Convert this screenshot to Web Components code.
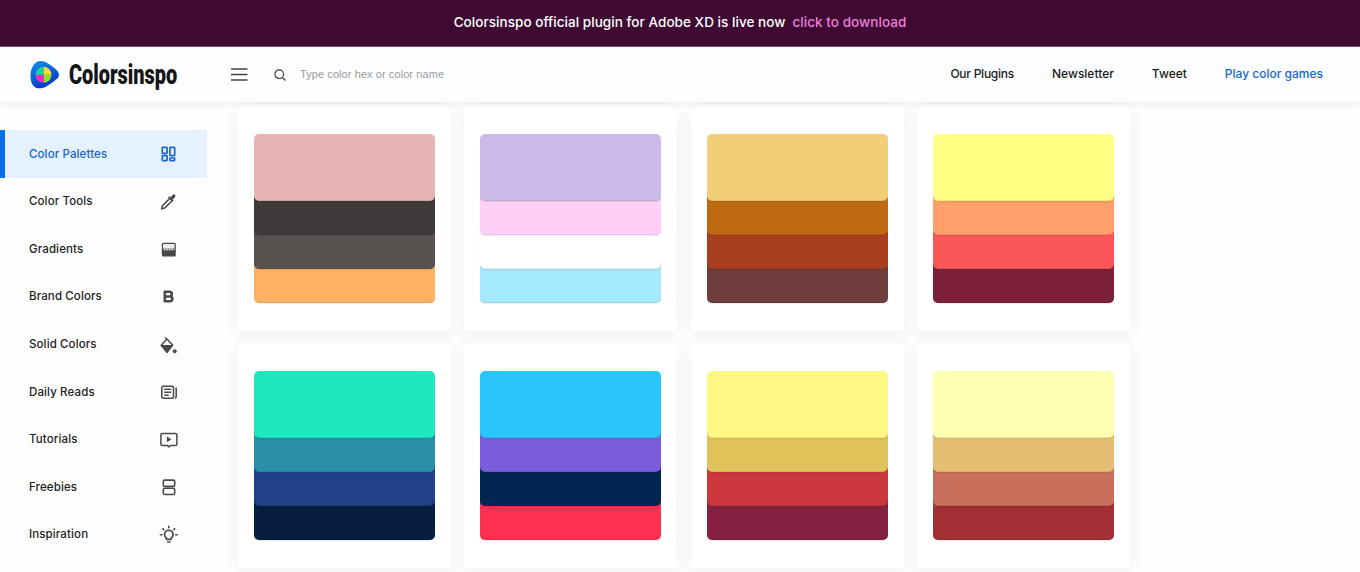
<!doctype html>
<html><head><meta charset="utf-8"><title>Colorsinspo</title>
<style>
html,body{margin:0;padding:0;height:572px;overflow:hidden;background:#fdfdfe;font-family:Inter,"Liberation Sans",sans-serif}
</style></head><body>
<app-shell></app-shell>
<script>
const ICONS={
palettes:`<g fill="none" stroke="currentColor" stroke-width="1.700"><rect x="3.300" y="3.300" width="4.800" height="6" rx=".5"/><rect x="3.300" y="11.600" width="4.800" height="5" rx=".5"/><rect x="10.900" y="3.300" width="4.800" height="8.300" rx=".5"/><rect x="10.900" y="14" width="4.800" height="2.600" rx=".5"/></g>`,
tools:`<g transform="translate(-.2 .7)"><path fill="none" stroke="currentColor" stroke-width="1.600" d="M10.500 6.200 3.600 13.100l-.6 2.900 2.900-.6 6.900-6.900"/><path fill="currentColor" d="m9.200 4.900 1.300-1.300 1 1 2.400-2.400a1.600 1.600 0 0 1 2.300 2.300l-2.400 2.400 1 1-1.300 1.300z"/></g>`,
gradients:`<rect x="2.800" y="3.800" width="14" height="13.700" rx="1.500" fill="currentColor"/><rect x="4" y="5" width="11.600" height="4.600" fill="#ececec"/><g fill="#f4f4f4"><circle cx="5.700" cy="10.600" r=".9"/><circle cx="8.100" cy="10.600" r=".9"/><circle cx="10.500" cy="10.600" r=".9"/><circle cx="12.900" cy="10.600" r=".9"/><circle cx="15" cy="10.600" r=".6"/></g>`,
brand:`<path fill="none" stroke="currentColor" stroke-width="2.600" stroke-linejoin="round" d="M5.800 4.800h4.600a2.350 2.350 0 0 1 0 4.700H5.800zM5.800 9.500h5.200a2.350 2.350 0 0 1 0 4.700H5.800z"/>`,
solid:`<path fill="none" stroke="currentColor" stroke-width="1.500" stroke-linejoin="round" d="M8 4 13.600 10 8 17.400 2.200 10.300Z"/><path fill="none" stroke="currentColor" stroke-width="1.300" d="M5.800 2.600 8 4.600"/><path fill="currentColor" d="M1.600 10h12.800l-6.400 8.200z"/><circle cx="15.700" cy="16.300" r="2" fill="currentColor"/>`,
reads:`<g fill="none" stroke="currentColor" stroke-width="1.500"><rect x="2.800" y="4.200" width="11.700" height="12" rx="1.500"/><path d="M17.200 5.500v9.200a1.500 1.500 0 0 1-1.300 1.500"/><path stroke-width="1.600" d="M5.200 7.300h7M5.200 10.300h7M5.200 13.300h4.500"/></g>`,
tutorials:`<g transform="translate(.4 .9)"><path fill="none" stroke="currentColor" stroke-width="1.500" stroke-linejoin="round" d="M3 2.500h13A1.500 1.500 0 0 1 17.500 4v9a1.500 1.500 0 0 1-1.500 1.500h-4.800l-1.700 1.500-1.700-1.500H3A1.500 1.500 0 0 1 1.500 13V4A1.500 1.500 0 0 1 3 2.500Z"/><path fill="currentColor" d="M7.500 5.700v5.600l4.500-2.800z"/></g>`,
freebies:`<g fill="none" stroke="currentColor" stroke-width="1.600"><rect x="4.300" y="3.100" width="11.400" height="6.300" rx="1.500"/><rect x="4.300" y="11.200" width="11.400" height="6.300" rx="1.500"/></g>`,
inspiration:`<g fill="none" stroke="currentColor" stroke-width="1.600" transform="translate(.3 .4)"><path d="M9.500 4.900a4.200 4.200 0 0 0-2.300 7.700v1.400h4.600v-1.400a4.200 4.200 0 0 0-2.300-7.700Z"/><path stroke-linecap="round" d="M9.500.9v1.400M3.600 3.300l1 1M15.400 3.300l-1 1M1.100 9.300h1.500M16.400 9.300h1.500"/><path stroke-linecap="round" d="M8.300 16.600h2.400"/></g>`
};
function def(name,css,html){
  customElements.define(name,class extends HTMLElement{
    constructor(){super();this.attachShadow({mode:'open'});}
    connectedCallback(){ if(!this.shadowRoot.firstChild) this.shadowRoot.innerHTML=`<style>${css}</style>${typeof html==='function'?html(this):html}`; }
  });
}
def('promo-banner',`:host{display:flex;justify-content:center;align-items:center;height:47px;padding-bottom:2px;background:#3f0b33;border-bottom:1px solid #7a4f70;box-sizing:border-box;color:#fff;font:500 13.500px Inter,sans-serif;letter-spacing:.05px}
span{color:#e97fdc;margin-left:7px}`,`Colorsinspo official plugin for Adobe XD is live now <span>click to download</span>`);
def('brand-logo',`:host{display:flex;align-items:center;gap:9px;width:201px}
svg{flex:none;display:block}
b{display:inline-block;font:900 28px Roboto,sans-serif;color:#151515;transform:scaleX(.713);transform-origin:left center;white-space:nowrap;width:108px}`,
`<svg width="30" height="30" viewBox="0 0 30 30"><defs><linearGradient id="lg" x1=".2" y1="0" x2=".6" y2="1"><stop offset="0" stop-color="#0b8cf0"/><stop offset="1" stop-color="#0a33c6"/></linearGradient></defs><path fill="url(#lg)" d="M9 1.200c4-.900 8 1.300 12 4.300 4 3 8 5.800 8 9.200 0 3.800-5 6.500-10 10-4 2.800-8.500 4.500-12.500 3.200-4-1.500-6-6-6-12.500C.5 9 3.500 2.500 9 1.200Z"/><g transform="translate(13.500 14.800)"><path fill="#ffdc2e" d="M0 0V-8a8 8 0 0 1 8 8z"/><path fill="#8fe02c" d="M0 0H8a8 8 0 0 1-8 8z"/><path fill="#ef2fc0" d="M0 0V8a8 8 0 0 1-8-8z"/><path fill="#1fd59a" d="M0 0H-8a8 8 0 0 1 8-8z"/></g></svg><b>Colorsinspo</b>`);
def('search-box',`:host{display:flex;align-items:center;gap:14px;font:400 11px "Liberation Sans",sans-serif;color:#9a9a9a}
span{padding-bottom:2px;letter-spacing:.08px}`,
`<svg width="12" height="12" viewBox="0 0 12 12" fill="none" stroke="#333" stroke-width="1.100"><circle cx="5.200" cy="5.200" r="4.300"/><path d="m8.300 8.300 3.200 3.200"/></svg><span>Type color hex or color name</span>`);
def('top-bar',`:host{display:flex;align-items:center;height:55px;background:#fcfdff;padding:0 37px 0 30px;box-shadow:0 2px 6px rgba(0,0,0,.08);position:relative;z-index:2}
.menu{display:block;flex:none;margin:0 26px 0 0}
nav{margin-left:auto;display:flex;gap:38px;font:500 12px Inter,sans-serif;color:#1a1a1a;padding-bottom:3px}
.hi{color:#1565c8}.tight{letter-spacing:-.25px}`,
`<brand-logo></brand-logo><svg class="menu" width="17" height="13" viewBox="0 0 17 13" stroke="#444" stroke-width="1.400"><path d="M0 1h16.500M0 6.500h16.500M0 12h16.500"/></svg><search-box></search-box><nav><span class="tight">Our Plugins</span><span>Newsletter</span><span>Tweet</span><span class="hi">Play color games</span></nav>`);
def('nav-item',`:host{display:flex;align-items:center;justify-content:space-between;height:47.600px;padding:0 29.500px 0 29px;box-sizing:border-box;font:500 11.500px Inter,sans-serif;letter-spacing:.12px;color:#222}
:host([active]){background:#e5f1fe;color:#1565c8;box-shadow:inset 5px 0 0 #0a6ee8}
span{padding-bottom:.5px}
svg{display:block;color:#4a4a4a}:host([active]) svg{color:#1f66c9}`,
h=>`<span><slot></slot></span><svg width="19" height="19" viewBox="0 0 19 19">${ICONS[h.getAttribute('icon')]}</svg>`);
def('side-nav',`:host{display:block;width:207px;flex:none;padding-top:28px}`,`<slot></slot>`);
def('palette-card',`:host{display:block;background:#fff;border-radius:3px;padding:27px 16px 28px;box-shadow:0 4px 16px rgba(0,0,0,.05)}
.p{display:flex;flex-direction:column;height:169px}
i{display:block;flex:none;border-radius:0 0 5px 5px;box-shadow:inset 0 -1px 0 rgba(0,0,0,.08),0 1px 1px rgba(0,0,0,.08);margin-top:-6px;height:40px}
i:first-child{margin-top:0;height:67px;border-radius:5px}`,
h=>`<div class="p">${h.getAttribute('colors').split(',').map((c,n)=>`<i style="background:${c};z-index:${4-n};position:relative"></i>`).join('')}</div>`);
def('palette-grid',`:host{display:grid;grid-template-columns:repeat(4,213px);gap:12px 13.300px;padding:5px 0 0 31px;align-content:start}`,`<slot></slot>`);
def('app-shell',`:host{display:block}main{display:flex}`,
`<promo-banner></promo-banner><top-bar></top-bar><main><side-nav>
<nav-item active icon="palettes">Color Palettes</nav-item><nav-item icon="tools">Color Tools</nav-item><nav-item icon="gradients">Gradients</nav-item><nav-item icon="brand">Brand Colors</nav-item><nav-item icon="solid">Solid Colors</nav-item><nav-item icon="reads">Daily Reads</nav-item><nav-item icon="tutorials">Tutorials</nav-item><nav-item icon="freebies">Freebies</nav-item><nav-item icon="inspiration">Inspiration</nav-item>
</side-nav><palette-grid>
<palette-card colors="#e6b3b3,#403b3a,#575150,#ffb162"></palette-card>
<palette-card colors="#cbbbe9,#ffd0f5,#ffffff,#a4e9fd"></palette-card>
<palette-card colors="#f2ce79,#bd6a12,#a93f1e,#6f3d3c"></palette-card>
<palette-card colors="#ffff83,#ff9f69,#fc5758,#7c1f39"></palette-card>
<palette-card style="padding-top:28px" colors="#1ee8c0,#288fa7,#1f418a,#081e3e"></palette-card>
<palette-card style="padding-top:28px" colors="#2ac5fb,#7b5cdb,#022652,#ff2f52"></palette-card>
<palette-card style="padding-top:28px" colors="#fdf884,#e0c45b,#cb383c,#862040"></palette-card>
<palette-card style="padding-top:28px" colors="#feffb1,#e5be74,#c8705b,#a22f33"></palette-card>
</palette-grid></main>`);
</script>
</body></html>
